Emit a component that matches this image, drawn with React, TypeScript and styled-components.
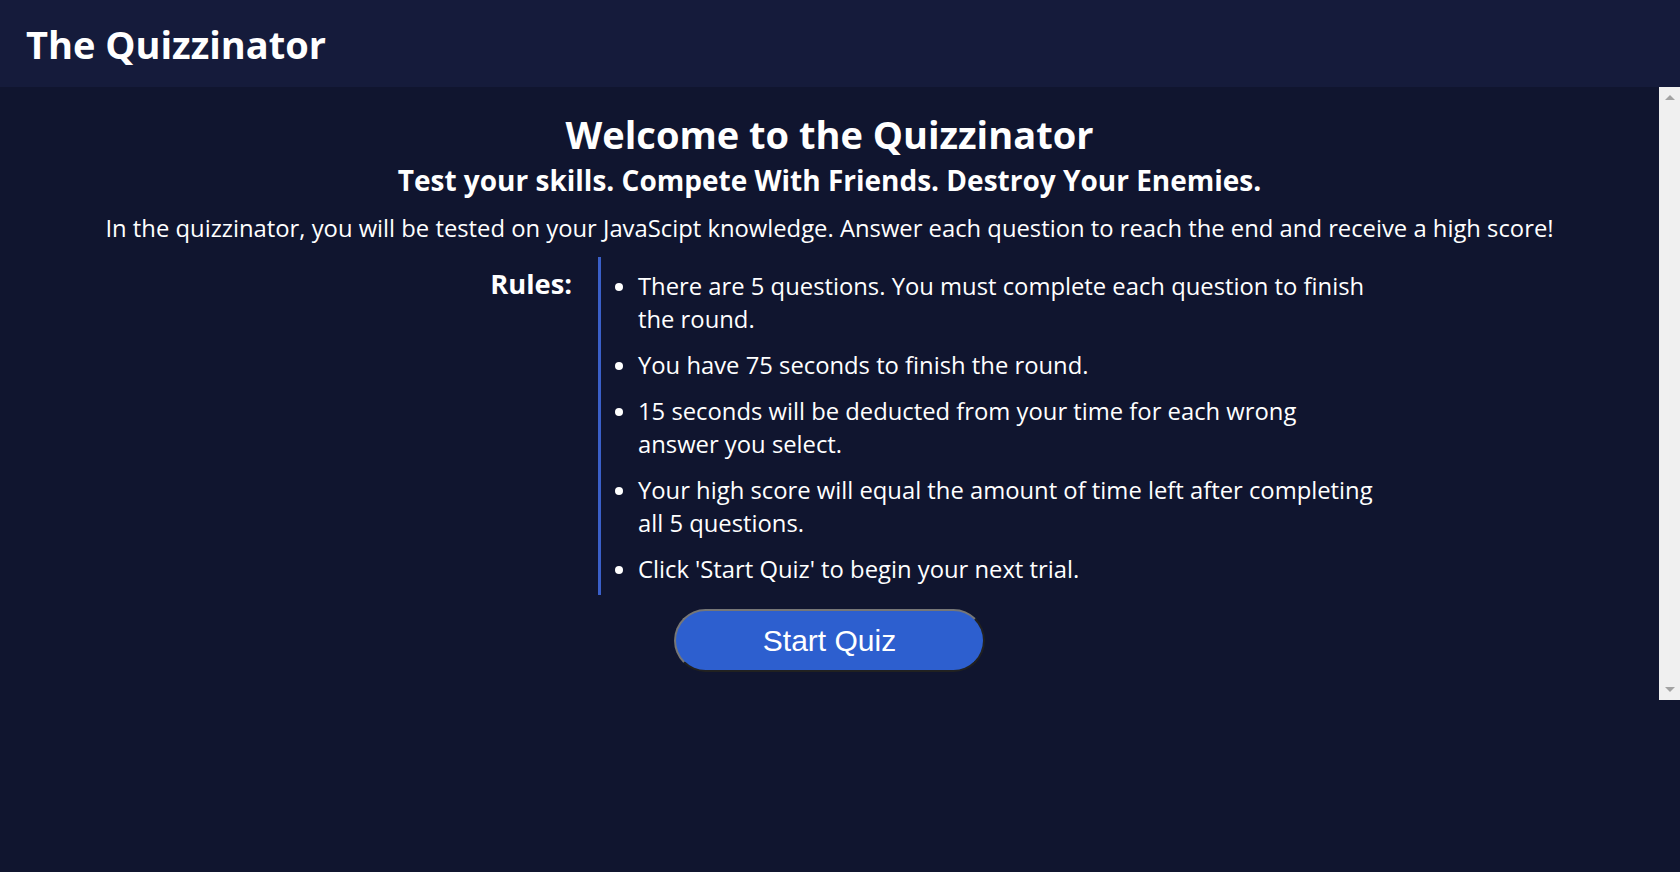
import React from 'react';
import styled, { createGlobalStyle } from 'styled-components';

const RULES = [
    'There are 5 questions. You must complete each question to finish the round.',
    'You have 75 seconds to finish the round.',
    '15 seconds will be deducted from your time for each wrong answer you select.',
    'Your high score will equal the amount of time left after completing all 5 questions.',
    "Click 'Start Quiz' to begin your next trial.",
];

const GlobalStyle = createGlobalStyle`
    html, body {
        margin: 0;
        padding: 0;
        background-color: #10152f;
        color: #ffffff;
        font-family: 'Open Sans', 'Noto Sans', sans-serif;
    }
`;

const App = () => {
    return (
        <>
            <GlobalStyle />
            <Header>
                <Title>The Quizzinator</Title>
            </Header>
            <MainFrame>
                <Main>
                    <Welcome>Welcome to the Quizzinator</Welcome>
                    <Tagline>Test your skills. Compete With Friends. Destroy Your Enemies.</Tagline>
                    <Intro>
                        In the quizzinator, you will be tested on your JavaScipt knowledge. Answer each question to reach
                        the end and receive a high score!
                    </Intro>
                    <RulesRow>
                        <RulesLabel>Rules:</RulesLabel>
                        <RulesList>
                            {RULES.map((rule) => (
                                <RuleItem key={rule}>{rule}</RuleItem>
                            ))}
                        </RulesList>
                    </RulesRow>
                    <StartButton type="button">Start Quiz</StartButton>
                </Main>
                {/* classic scrollbar rail */}
                <ScrollRail>
                    <RailArrow $dir="up" />
                    <RailArrow $dir="down" />
                </ScrollRail>
            </MainFrame>
        </>
    );
};

const Header = styled.header`
    display: flex;
    align-items: center;
    height: 87px;
    padding-left: 26px;
    background-color: #151b3b;
`;

const Title = styled.h1`
    margin: 0;
    font-size: 38px;
    line-height: 48px;
    font-weight: 700;
`;

const MainFrame = styled.div`
    display: flex;
    height: 613px;
`;

const Main = styled.main`
    flex: 1;
    display: flex;
    flex-direction: column;
    align-items: center;
    box-sizing: border-box;
    padding-top: 23px;
    overflow-y: auto;
    text-align: center;
`;

const ScrollRail = styled.div`
    display: flex;
    flex-direction: column;
    justify-content: space-between;
    align-items: center;
    box-sizing: border-box;
    width: 21px;
    padding: 8px 0;
    background-color: #f0f0f0;
`;

const RailArrow = styled.span<{ $dir: 'up' | 'down' }>`
    width: 0;
    height: 0;
    border-left: 5px solid transparent;
    border-right: 5px solid transparent;
    ${({ $dir }) => ($dir === 'up' ? 'border-bottom: 5px solid #a3a3a3;' : 'border-top: 5px solid #a3a3a3;')}
`;

const Welcome = styled.h2`
    margin: 0;
    font-size: 38px;
    line-height: 48px;
    font-weight: 700;
`;

const Tagline = styled.h3`
    margin: 4px 0 0;
    font-size: 28px;
    line-height: 36px;
    font-weight: 700;
`;

const Intro = styled.p`
    margin: 14px 0 0;
    font-size: 23.8px;
    line-height: 32px;
`;

const RulesRow = styled.section`
    display: flex;
    align-self: stretch;
    margin-top: 13px;
    text-align: left;
`;

const RulesLabel = styled.h4`
    box-sizing: border-box;
    width: 598px;
    margin: 9px 0 0;
    padding-right: 26px;
    text-align: right;
    font-size: 27.3px;
    line-height: 36px;
    font-weight: 700;
`;

const RulesList = styled.ul`
    display: flex;
    flex-direction: column;
    gap: 13px;
    width: 738px;
    margin: 0;
    padding: 13px 0 9px 37px;
    border-left: 3px solid #3a5fc8;
`;

const RuleItem = styled.li`
    font-size: 23.8px;
    line-height: 33px;
`;

const StartButton = styled.button`
    width: 311px;
    height: 63px;
    margin-top: 14px;
    border: 2px outset #767676;
    border-radius: 32px;
    background-color: #2d5fcf;
    color: #ffffff;
    font-family: 'Liberation Sans', Arial, sans-serif;
    font-size: 30px;
    cursor: pointer;
`;

export default App;
